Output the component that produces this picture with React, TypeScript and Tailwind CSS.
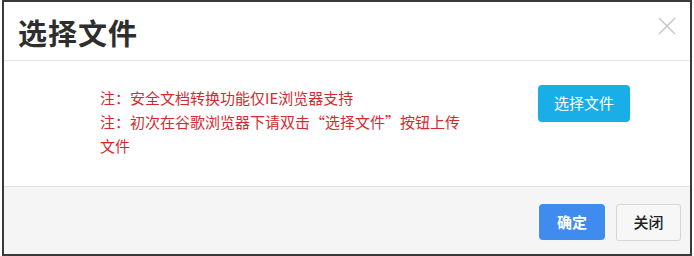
import React from "react";

export default function App() {
  const font = { fontFamily: '"Noto Sans CJK SC", "Noto Sans", sans-serif' };
  return (
    <div className="w-[694px] h-[256px] bg-white pl-[2px]" style={font}>
      <div className="h-full w-[690px] border-2 border-[#3a3a3a] flex flex-col bg-white">
        <div className="h-[59px] shrink-0 border-b border-[#e6e6e6] flex items-center justify-between pl-[14px] pr-[13px]">
          <h1 className="text-[29px] leading-none font-bold text-[#2e2e2e] tracking-[1px] mt-[3px]">选择文件</h1>
          <svg width="20" height="20" viewBox="0 0 20 20" className="mt-[-10px]">
            <path d="M2 2 L18 18 M18 2 L2 18" stroke="#c9c9c9" strokeWidth="1.6" fill="none" />
          </svg>
        </div>
        <div className="flex-1 flex items-start pl-[96px] pt-[24px] border-b border-[#e3e3e3]">
          <div className="w-[366px] text-[15px] leading-[24px] text-[#d42a2f] mt-[1px]">
            <p>注：安全文档转换功能仅IE浏览器支持</p>
            <p>注：初次在谷歌浏览器下请双击“选择文件”按钮上传文件</p>
          </div>
          <button className="ml-[72px] w-[92px] h-[37px] rounded-[4px] bg-[#1aaee8] text-white text-[15px] flex items-center justify-center">
            选择文件
          </button>
        </div>
        <div className="h-[67px] shrink-0 bg-[#f5f5f5] flex items-start justify-end pt-[17px] pr-[9px] gap-[11px]">
          <button className="w-[66px] h-[36px] rounded-[4px] bg-[#3f8cee] text-white text-[15px] font-bold flex items-center justify-center">
            确定
          </button>
          <button className="w-[65px] h-[37px] rounded-[3px] bg-[#f7f7f7] border border-[#d6d6d6] text-[#222] text-[15px] font-medium flex items-center justify-center">
            关闭
          </button>
        </div>
      </div>
    </div>
  );
}
